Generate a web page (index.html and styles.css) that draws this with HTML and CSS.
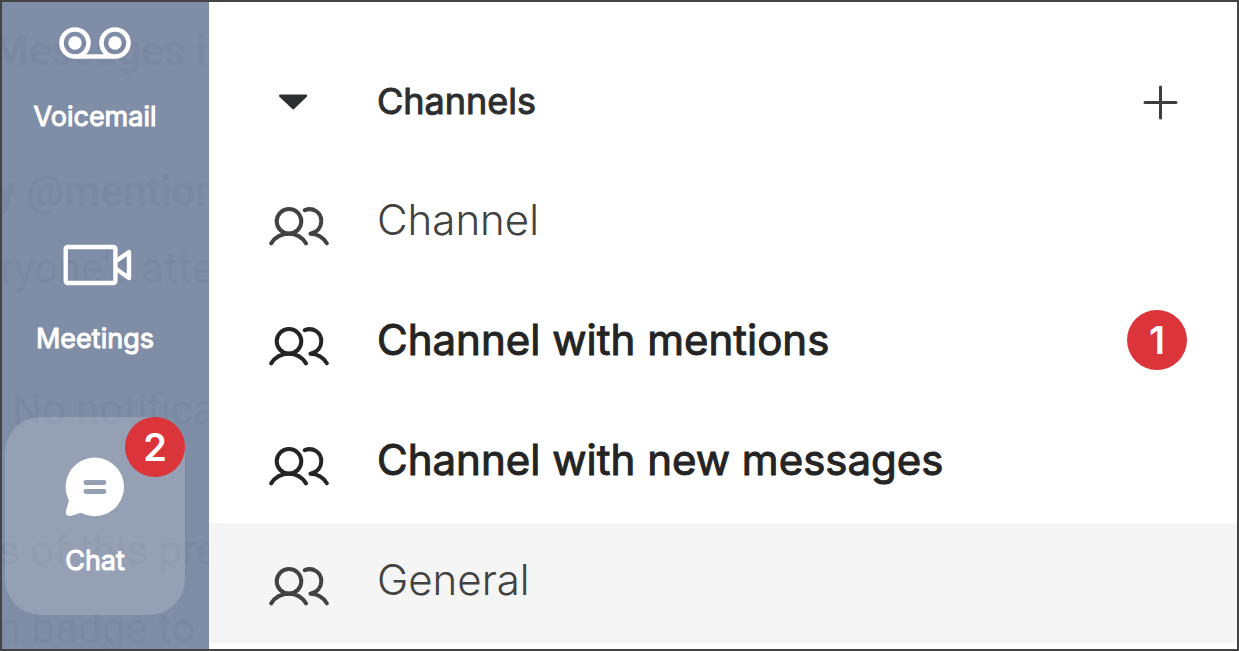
FILE: index.html
```html
<!DOCTYPE html>
<html lang="en">
<head>
<meta charset="utf-8">
<title>Channels</title>
<link rel="stylesheet" href="styles.css">
</head>
<body>
<svg class="defs" aria-hidden="true">
  <symbol id="people" viewBox="0 0 60 60">
    <g fill="none" stroke="currentColor" stroke-width="4" stroke-linecap="round" stroke-linejoin="round">
      <circle cx="20" cy="31.3" r="12.3"/>
      <path d="M2.2 53.300C6.2 47.100 12.5 43.800 20 43.800S33 47.100 37 53.300"/>
      <path d="M35.8 20.2C44 16.8 52.300 22.500 52.300 31C52.300 36.300 49 42 41.500 43.800C48.500 43.900 54 47.300 57.800 53.300"/>
    </g>
  </symbol>
</svg>
<div class="app">
  <nav class="sidebar">
    <div class="ghost" aria-hidden="true">
      <p class="ghost-line ghost-strong g1">Messages i</p>
      <p class="ghost-line ghost-strong g2">y @mention</p>
      <p class="ghost-line g3">ryone's atte</p>
      <p class="ghost-line g4">No notifica</p>
      <p class="ghost-line g5">s of this pre</p>
      <p class="ghost-line g6">n badge to</p>
    </div>
    <a class="tile" href="#voicemail">
      <svg class="tile-icon" viewBox="0 0 80 80" aria-hidden="true">
        <g fill="none" stroke="#fff" stroke-width="4.600"><circle cx="20" cy="40" r="13.500"/><circle cx="60" cy="40" r="13.500"/><path d="M20 53.500H60"/></g>
        <circle cx="20" cy="40" r="6.700" fill="#fff"/><circle cx="60" cy="40" r="6.700" fill="#fff"/>
      </svg>
      <span class="tile-label">Voicemail</span>
    </a>
    <a class="tile" href="#meetings">
      <svg class="tile-icon" viewBox="0 0 80 80" aria-hidden="true">
        <g fill="none" stroke="#fff" stroke-width="4.400" stroke-linejoin="round"><rect x="10.700" y="22" width="49.700" height="36" rx="2"/><path d="M60.500 36.500L74 27V53L60.500 43.500"/></g>
      </svg>
      <span class="tile-label">Meetings</span>
    </a>
    <a class="tile tile-active" href="#chat" aria-current="page">
      <svg class="tile-icon" viewBox="0 0 80 80" aria-hidden="true">
        <path fill="#fff" d="M40 10.600A29.300 29.300 0 1 1 25.800 65.700L16.500 68.800C13 70 10 67.500 10.900 64L14 53.500A29.300 29.300 0 0 1 40 10.600Z"/>
        <path d="M30.800 35.500H49M30.800 44.500H49" stroke="#96a0b4" stroke-width="4.800" stroke-linecap="round"/>
      </svg>
      <span class="tile-label">Chat</span>
      <span class="badge badge-corner">2</span>
    </a>
  </nav>
  <main class="panel">
    <header class="row row-head">
      <button class="toggle" type="button" aria-expanded="true" aria-label="Collapse channels">
        <svg class="icon" viewBox="0 0 60 60" aria-hidden="true"><path d="M11.200 24.800H37L24.200 37.200Z" fill="#2d2e2f" stroke="#2d2e2f" stroke-width="2.400" stroke-linejoin="round"/></svg>
      </button>
      <h2 class="title">Channels</h2>
      <button class="add" type="button" aria-label="Add channel">
        <svg class="icon" viewBox="0 0 60 60" aria-hidden="true"><path d="M33.500 16V47M18 31.500H49" stroke="#3d3d3d" stroke-width="3" stroke-linecap="round"/></svg>
      </button>
    </header>
    <a class="row" href="#channel"><svg class="icon" aria-hidden="true"><use href="#people"/></svg><span class="name">Channel</span></a>
    <a class="row unread" href="#mentions"><svg class="icon" aria-hidden="true"><use href="#people"/></svg><span class="name">Channel with mentions</span><span class="badge">1</span></a>
    <a class="row unread" href="#new"><svg class="icon" aria-hidden="true"><use href="#people"/></svg><span class="name">Channel with new messages</span></a>
    <a class="row selected" href="#general"><svg class="icon" aria-hidden="true"><use href="#people"/></svg><span class="name">General</span></a>
  </main>
</div>
</body>
</html>
```
FILE: styles.css
```css
* { box-sizing: border-box; }
body { margin: 0; font-family: Inter, "Liberation Sans", sans-serif; color: #424243; }
.defs { position: absolute; width: 0; height: 0; }
.app { display: flex; min-height: 100vh; border: 2px solid #444; background: #fff; overflow: hidden; }
a { color: inherit; text-decoration: none; }
button { padding: 0; border: 0; background: none; }

.sidebar { position: relative; flex: none; display: flex; flex-direction: column; gap: 24px; width: 207px; height: calc(100vh - 4px); padding: 0 24px 0 3px; background: #808da7; overflow: hidden; }
.tile { position: relative; flex: none; display: flex; flex-direction: column; align-items: center; gap: 16px; padding: 30px 0 36px; border-radius: 36px; color: #fff; }
.tile:first-of-type { margin-top: -29px; }
.tile-active { background: rgba(255, 255, 255, 0.17); }
.tile-icon { display: block; width: 80px; height: 80px; }
.tile-label { font-size: 27px; line-height: 36px; font-weight: 400; -webkit-text-stroke: 1px currentColor; }

.ghost { position: absolute; inset: 0; overflow: hidden; }
.ghost-line { position: absolute; margin: 0; font: 400 42px/48px Roboto, sans-serif; color: #7b88a2; white-space: nowrap; }
.ghost-strong { font-weight: 600; }
.g1 { left: -10px; top: 25px; }
.g2 { left: -7px; top: 166px; }
.g3 { left: -2px; top: 243px; }
.g4 { left: 10px; top: 384px; }
.g5 { left: -4px; top: 525px; }
.g6 { left: -4px; top: 603px; }

.badge { flex: none; width: 60px; border-radius: 50%; background: #db343b; color: #fff; font-size: 38px; line-height: 60px; font-weight: 600; text-align: center; }
.badge-corner { position: absolute; top: 0; right: 0; }

.panel { flex: 1; min-width: 0; padding-top: 41px; }
.row { display: flex; align-items: center; gap: 48px; height: 120px; padding: 0 50px 6px 60px; }
.row-head { padding-bottom: 4px; }
.icon { flex: none; display: block; width: 60px; height: 60px; }
.name { flex: 1; font-size: 42px; line-height: 52px; font-weight: 350; }
.title { flex: 1; margin: 0; font-size: 36px; line-height: 48px; font-weight: 400; color: #2d2e2f; -webkit-text-stroke: 1px currentColor; }
.unread { color: #242424; }
.unread .name { font-weight: 400; -webkit-text-stroke: 1px currentColor; }
.selected { background: #f5f5f5; }
```
